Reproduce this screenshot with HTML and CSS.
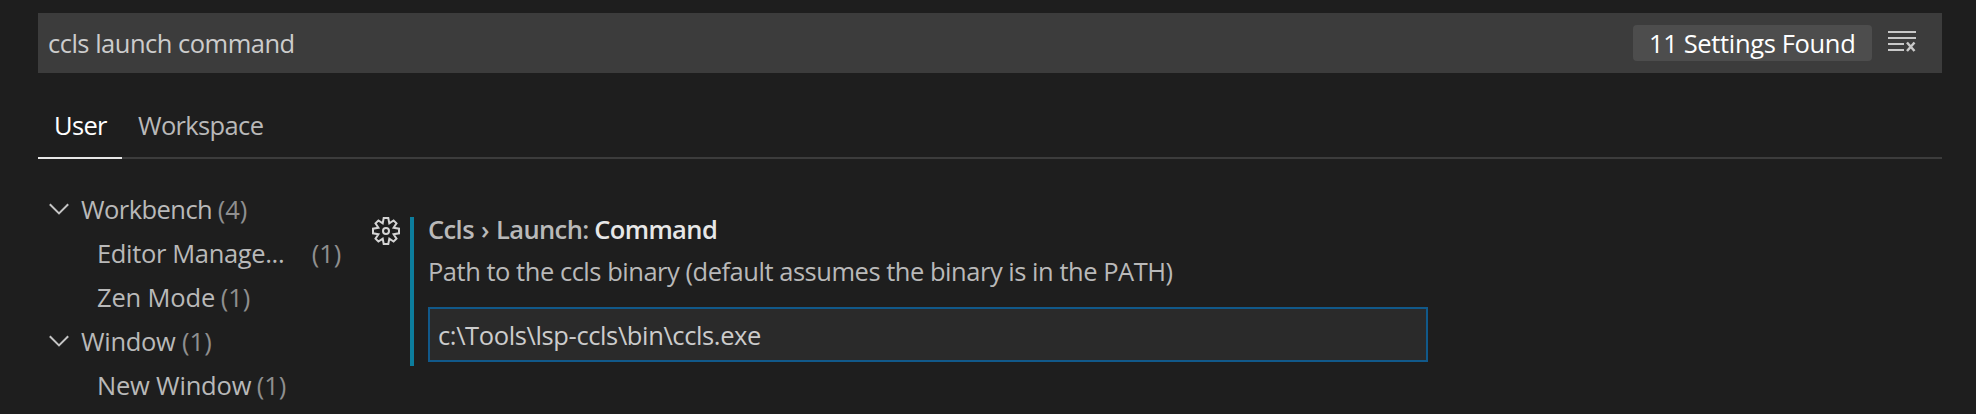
FILE: index.html
```html
<!DOCTYPE html>
<html lang="en">
<head>
<meta charset="utf-8">
<title>Settings</title>
<link rel="stylesheet" href="styles.css">
</head>
<body>
<div class="settings">
  <header class="search">
    <span class="query">ccls launch command</span>
    <span class="badge">11 Settings Found</span>
    <svg class="clear" viewBox="0 0 28 21" width="28" height="21"><path d="M0 1h28M0 7h28M0 13h16M0 19h16" fill="none" stroke="#c9c9c9" stroke-width="2"/><path d="M19 11.500l7.500 8.500M26.500 11.500l-7.500 8.500" fill="none" stroke="#c9c9c9" stroke-width="2.500"/></svg>
  </header>
  <nav class="tabs">
    <div class="tab active">User</div>
    <div class="tab">Workspace</div>
  </nav>
  <main class="body">
    <aside class="tree">
      <div class="row workbench"><svg class="chev" viewBox="0 0 20 12" width="20" height="12"><path d="M.8 1.200L10 10.400L19.200 1.200" fill="none" stroke="#c5c5c5" stroke-width="2"/></svg><span>Workbench</span><span class="count">(4)</span></div>
      <div class="row child editor"><span>Editor Manage...</span><span class="count">(1)</span></div>
      <div class="row child zen"><span>Zen Mode</span><span class="count">(1)</span></div>
      <div class="row window"><svg class="chev" viewBox="0 0 20 12" width="20" height="12"><path d="M.8 1.200L10 10.400L19.200 1.200" fill="none" stroke="#c5c5c5" stroke-width="2"/></svg><span>Window</span><span class="count">(1)</span></div>
      <div class="row child new-window"><span>New Window</span><span class="count">(1)</span></div>
    </aside>
    <svg class="gear" viewBox="-14 -14 28 28" width="28" height="28"><path d="M-2.300 -13H2.300L3.300 -7.600L7.600 -10.500L10.500 -7.600L7.600 -3.300L13 -2.300V2.300L7.600 3.300L10.500 7.600L7.600 10.500L3.300 7.600L2.300 13H-2.300L-3.300 7.600L-7.600 10.500L-10.500 7.600L-7.600 3.300L-13 2.300V-2.300L-7.600 -3.300L-10.500 -7.600L-7.600 -10.500L-3.300 -7.600Z" fill="none" stroke="#d4d4d4" stroke-width="2"/><circle r="3" fill="none" stroke="#d4d4d4" stroke-width="2"/></svg>
    <section class="item">
      <div class="title"><span class="cat">Ccls › Launch:</span><span class="name">Command</span></div>
      <div class="desc">Path to the ccls binary (default assumes the binary is in the PATH)</div>
      <div class="field">c:\Tools\lsp-ccls\bin\ccls.exe</div>
    </section>
  </main>
</div>
</body>
</html>
```
FILE: styles.css
```css
* { box-sizing: border-box; }
body { margin: 0; width: 1976px; height: 414px; overflow: hidden; background: #1e1e1e; color: #b9b9b9; font: 25.5px/44px "Open Sans", sans-serif; white-space: nowrap; }
.settings { padding: 13px 34px 0 38px; }
.search { display: flex; height: 60px; padding: 12px 26px 0 10px; background: #3c3c3c; }
.query { line-height: 36px; color: #ccc; letter-spacing: -.5px; }
.badge { width: 239px; height: 36px; margin-left: auto; padding-left: 16px; border-radius: 4px; background: #4d4d4d; color: #fff; line-height: 36px; letter-spacing: -.35px; }
.clear { margin: 6px 0 0 16px; }
.tabs { display: flex; height: 86px; padding-top: 30px; border-bottom: 2px solid #3c3c3c; }
.tab { height: 56px; padding: 0 16px; letter-spacing: -.65px; }
.active { width: 84px; border-bottom: 2px solid #e7e7e7; color: #fff; }
.body { display: flex; padding-top: 28px; }
.tree { width: 334px; }
.row { display: flex; align-items: center; height: 44px; padding-left: 11px; }
.child { padding-left: 59px; }
.chev { margin-right: 12px; }
.count { margin-left: 5.500px; color: #8f8f8f; letter-spacing: 0; }
.workbench { letter-spacing: -.55px; }
.editor { letter-spacing: -.35px; }
.editor .count { margin-left: 27.500px; }
.zen { letter-spacing: -.15px; }
.window { letter-spacing: -.3px; }
.window .count { margin-left: 6.500px; }
.new-window { letter-spacing: -.2px; }
.gear { margin-top: 30px; }
.item { width: 1018px; height: 149px; margin: 30px 0 0 10px; padding-left: 14px; border-left: 4px solid #0c7d9d; }
.title { display: flex; height: 42px; line-height: 24px; font-weight: 600; letter-spacing: -.6px; }
.cat { word-spacing: 1px; }
.name { margin-left: 5.500px; color: #e7e7e7; }
.desc { height: 48px; line-height: 24px; letter-spacing: -.475px; }
.field { height: 55px; padding: 1px 0 0 8px; border: 2px solid #11598a; background: #2a2a2a; color: #ccc; line-height: 51px; letter-spacing: -.38px; }
```
